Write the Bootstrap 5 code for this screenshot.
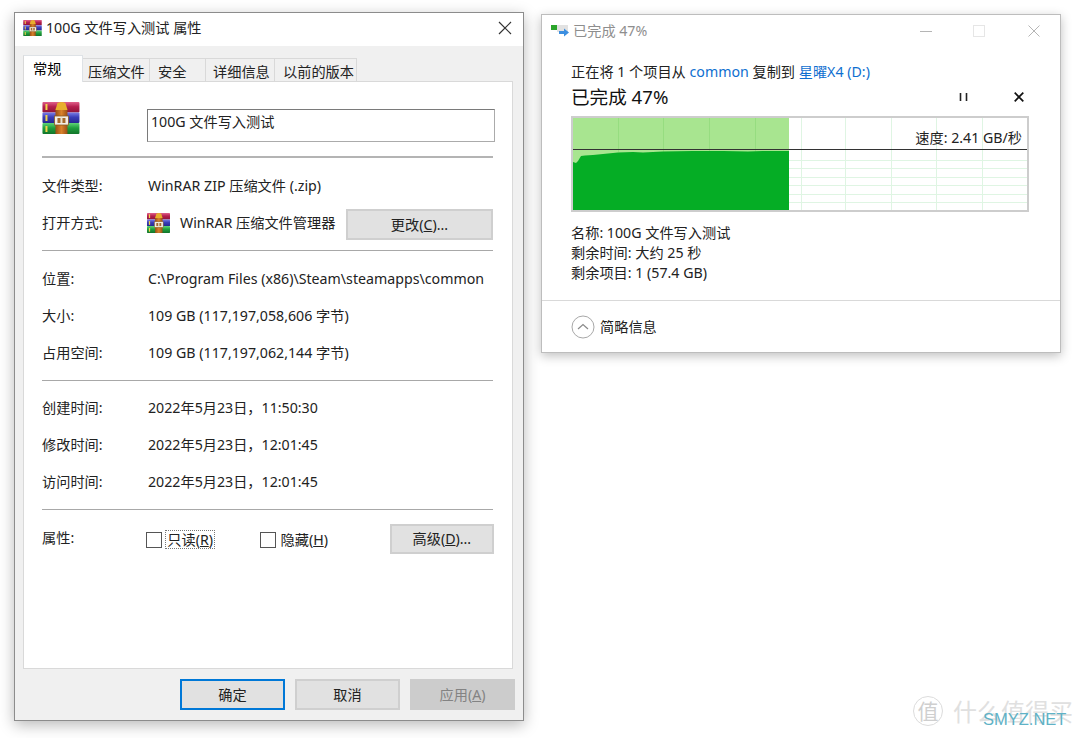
<!DOCTYPE html>
<html lang="zh-CN">
<head>
    <meta charset="UTF-8">
    <meta name="viewport" content="width=device-width, initial-scale=1.0">
    <title>100G 文件写入测试 属性</title>
    <link href="https://cdn.jsdelivr.net/npm/bootstrap@5.3.3/dist/css/bootstrap.min.css" rel="stylesheet">
    <style>
        html, body {
            height: 738px;
            overflow: hidden;
            background-color: #fff;
        }
        body {
            font-family: "Noto Sans", "Noto Sans CJK SC", sans-serif;
            font-size: 14.2px;
            line-height: 20px;
            color: #222;
        }
        .desktop {
            padding: 12px 0 0 14px;
            gap: 17px;
        }

        /* properties window */
        .props-win {
            width: 510px;
            height: 709px;
            background-color: #f0f0f0;
            border: 1px solid #8c8c8c;
            box-shadow: 0 4px 14px rgba(0, 0, 0, .28);
        }
        .props-title {
            height: 33px;
            background-color: #fff;
            padding: 0 0 3px 8px;
            font-size: 14.2px;
            gap: 4px;
        }
        .props-close {
            margin-right: 11px;
        }
        .tab-strip {
            margin: 9px 0 0 8px;
            height: 26px;
            align-items: flex-end;
            border: 0;
        }
        .tab-strip .nav-link {
            height: 23px;
            padding: 0 0 0 8px;
            margin: 0;
            font-size: 14.2px;
            line-height: 26px;
            color: #222;
            background-color: #f0f0f0;
            border: 1px solid #d9d9d9;
            border-bottom: 0;
            border-left: 0;
            border-radius: 0;
            text-align: left;
            white-space: nowrap;
            overflow: hidden;
        }
        .tab-strip .nav-link.active {
            height: 27px;
            width: 60px;
            margin-bottom: -1px;
            padding-left: 9px;
            line-height: 25px;
            background-color: #fff;
            border-left: 1px solid #d9d9d9;
            position: relative;
            z-index: 1;
        }
        .tab-strip .tab-w1 { width: 67px; padding-left: 5px; }
        .tab-w2 { width: 56px; }
        .tab-strip .tab-w3 { width: 69px; padding-left: 7px; }
        .tab-w4 { width: 82px; }
        .tab-panel {
            width: 490px;
            height: 588px;
            margin-left: 8px;
            padding: 20px 18px 0 18px;
            background-color: #fff;
            border: 1px solid #d9d9d9;
        }
        .name-row {
            height: 54px;
        }
        .name-input {
            width: 349px;
            height: 33px;
            margin: 7px -1px 0 67px;
            padding: 0 3px 10px;
            font-size: 14.2px;
            line-height: 22px;
            color: #222;
            border: 1px solid #7a7a7a;
            border-bottom-color: #ababab;
            border-right-color: #ababab;
            border-radius: 0;
        }
        .sep-line {
            width: 451px;
            margin: 0;
            border: 0;
            border-top: 1px solid #a8a8a8;
            opacity: 1;
        }
        .sep-thick {
            border-top: 2px solid #b4b4b4;
        }
        .prop-group {
            padding: 9px 0;
        }
        .prop-group-b {
            padding: 8px 0 9px;
        }
        .prop-row {
            height: 37px;
        }
        .prop-key {
            width: 106px;
            flex-shrink: 0;
        }
        .rar-icon-sm {
            margin: 0 10px 0 -1px;
        }
        .win-btn {
            height: 31px;
            padding: 0;
            font-size: 14.2px;
            line-height: 26px;
            color: #222;
            background-color: #e1e1e1;
            border: 2px solid #cfcfcf;
            border-radius: 0;
        }
        .win-btn:disabled {
            color: #838383;
            background-color: #ccc;
            border-color: #ccc;
            opacity: 1;
        }
        .win-btn-default {
            border-color: #0078d7;
        }
        .btn-change {
            width: 147px;
            margin: 4px 1px 0 auto;
        }
        .btn-std {
            width: 105px;
        }
        .attr-row {
            padding-top: 14px;
            height: 44px;
        }
        .attr-row .win-btn {
            height: 30px;
            margin-left: 1px;
        }
        .attr-key {
            width: 105px;
            margin-top: -3px;
        }
        .win-check {
            width: 16px;
            height: 16px;
            border: 1px solid #555;
            background-color: #fff;
            flex-shrink: 0;
            margin-right: 3px;
        }
        .check-label {
            padding: 0 1px;
            border: 1px dotted transparent;
            line-height: 17px;
        }
        .check-focus {
            border-color: #777;
        }
        .check-one {
            width: 114px;
            margin-top: 1px;
        }
        .check-two {
            width: 130px;
            margin-top: 1px;
        }
        .props-actions {
            padding: 10px 8px 0 0;
            gap: 10px;
        }

        /* copy progress window */
        .copy-win {
            width: 520px;
            height: 339px;
            margin-top: 2px;
            background-color: #fff;
            border: 1px solid #bdbdbd;
            box-shadow: 0 3px 10px rgba(0, 0, 0, .25);
        }
        .copy-title {
            height: 33px;
            padding: 0 20px 2px 9px;
            color: #8e8e8e;
            font-size: 14.2px;
        }
        .copy-title-text {
            margin-left: 4px;
        }
        .copy-controls {
            gap: 41px;
        }
        .copy-close {
            margin-left: 2px;
        }
        .copy-body {
            padding: 14px 31px 0 29px;
        }
        .copy-link {
            color: #0f6fd0;
            text-decoration: none;
        }
        .copy-head {
            height: 29px;
            font-size: 18.6px;
            line-height: 27px;
            color: #111;
        }
        .copy-head-icons {
            gap: 46px;
            margin-right: 5px;
        }
        .speed-chart {
            width: 458px;
            height: 96px;
            margin-top: 5px;
            border: 2px solid #cdcdcd;
        }
        .speed-chart svg {
            display: block;
        }
        .speed-label {
            position: absolute;
            right: 5px;
            top: 10px;
            color: #222;
        }
        .copy-info {
            margin-top: 11px;
        }
        .copy-more {
            height: 52px;
            margin-top: 17px;
            padding-left: 29px;
            border-top: 1px solid #d9d9d9;
            gap: 5px;
        }

        /* site watermark */
        .site-mark {
            position: absolute;
            left: 913px;
            top: 696px;
            width: 167px;
            height: 42px;
            overflow: hidden;
        }
        .mark-badge {
            width: 30px;
            height: 30px;
            border: 1px solid #dcdcdc;
            border-radius: 50%;
            color: #cfcfcf;
            font-size: 21px;
            line-height: 28px;
            text-align: center;
        }
        .mark-text {
            position: absolute;
            left: 40px;
            top: 1px;
            font-size: 24px;
            line-height: 30px;
            color: #e0e0e0;
            white-space: nowrap;
        }
        .mark-net {
            position: absolute;
            left: 70px;
            top: 13px;
            font-family: "Liberation Sans", sans-serif;
            font-size: 16.5px;
            line-height: 20px;
            color: #5fb2c6;
        }
    </style>
</head>
<body>

<!-- shared icon -->
<svg width="0" height="0" class="position-absolute">
    <defs>
        <linearGradient id="bookRed" x1="0" y1="0" x2="0" y2="1"><stop offset="0" stop-color="#e0608a"/><stop offset=".45" stop-color="#b51f4f"/><stop offset="1" stop-color="#8e1439"/></linearGradient>
        <linearGradient id="bookBlue" x1="0" y1="0" x2="0" y2="1"><stop offset="0" stop-color="#7a7ee6"/><stop offset=".45" stop-color="#3a3db8"/><stop offset="1" stop-color="#25288f"/></linearGradient>
        <linearGradient id="bookGreen" x1="0" y1="0" x2="0" y2="1"><stop offset="0" stop-color="#5fd477"/><stop offset=".45" stop-color="#1f9f3e"/><stop offset="1" stop-color="#12752a"/></linearGradient>
        <linearGradient id="beltBrown" x1="0" y1="0" x2="1" y2="0"><stop offset="0" stop-color="#9a4f16"/><stop offset=".5" stop-color="#d9822b"/><stop offset="1" stop-color="#9a4f16"/></linearGradient>
    </defs>
    <symbol id="rarIcon" viewBox="0 0 37 32">
        <rect x="0" y="0" width="37" height="10.500" rx="1" fill="url(#bookRed)"/>
        <rect x="0" y="10.500" width="37" height="10.500" rx="1" fill="url(#bookBlue)"/>
        <rect x="0" y="21" width="37" height="11" rx="1" fill="url(#bookGreen)"/>
        <rect x="3" y="2" width="2" height="6" fill="#f3d44a"/>
        <rect x="3" y="13" width="2" height="6" fill="#f3d44a"/>
        <rect x="3" y="24" width="2" height="6" fill="#f3d44a"/>
        <rect x="13" y="6" width="12" height="26" fill="url(#beltBrown)"/>
        <path d="M13 8 L15 1 Q19 -1 23 1 L25 8 Z" fill="#e8ae2e"/>
        <rect x="12" y="14" width="14" height="9" fill="#f3efe6" stroke="#8b5a20" stroke-width=".8"/>
        <rect x="15" y="16" width="8" height="5" fill="#a56a2c"/>
        <rect x="18" y="15" width="2" height="6" fill="#e8e2d2"/>
    </symbol>
</svg>

<div class="desktop d-flex align-items-start">

    <!-- Properties window -->
    <div class="props-win flex-shrink-0">
        <div class="props-title d-flex align-items-center">
            <svg width="19" height="16"><use href="#rarIcon"/></svg>
            <span class="flex-grow-1">100G 文件写入测试 属性</span>
            <svg class="props-close" width="14" height="14" viewBox="0 0 14 14"><path d="M1 1 13 13M13 1 1 13" stroke="#333" stroke-width="1.2" fill="none"/></svg>
        </div>

        <ul class="nav nav-tabs tab-strip">
            <li class="nav-item"><a class="nav-link active" href="#">常规</a></li>
            <li class="nav-item"><a class="nav-link tab-w1" href="#">压缩文件</a></li>
            <li class="nav-item"><a class="nav-link tab-w2" href="#">安全</a></li>
            <li class="nav-item"><a class="nav-link tab-w3" href="#">详细信息</a></li>
            <li class="nav-item"><a class="nav-link tab-w4" href="#">以前的版本</a></li>
        </ul>

        <div class="tab-panel">
            <div class="name-row d-flex align-items-start">
                <svg width="38" height="32"><use href="#rarIcon"/></svg>
                <input class="form-control name-input" type="text" value="100G 文件写入测试">
            </div>
            <hr class="sep-line sep-thick">

            <div class="prop-group">
                <div class="prop-row d-flex align-items-center">
                    <div class="prop-key">文件类型:</div>
                    <div>WinRAR ZIP 压缩文件 (.zip)</div>
                </div>
                <div class="prop-row d-flex align-items-center">
                    <div class="prop-key">打开方式:</div>
                    <svg class="rar-icon-sm" width="23" height="20"><use href="#rarIcon"/></svg>
                    <div>WinRAR 压缩文件管理器</div>
                    <button class="btn win-btn btn-change" type="button">更改(<u>C</u>)...</button>
                </div>
            </div>
            <hr class="sep-line">

            <div class="prop-group">
                <div class="prop-row d-flex align-items-center">
                    <div class="prop-key">位置:</div>
                    <div>C:\Program Files (x86)\Steam\steamapps\common</div>
                </div>
                <div class="prop-row d-flex align-items-center">
                    <div class="prop-key">大小:</div>
                    <div>109 GB (117,197,058,606 字节)</div>
                </div>
                <div class="prop-row d-flex align-items-center">
                    <div class="prop-key">占用空间:</div>
                    <div>109 GB (117,197,062,144 字节)</div>
                </div>
            </div>
            <hr class="sep-line">

            <div class="prop-group-b">
                <div class="prop-row d-flex align-items-center">
                    <div class="prop-key">创建时间:</div>
                    <div>2022年5月23日，11:50:30</div>
                </div>
                <div class="prop-row d-flex align-items-center">
                    <div class="prop-key">修改时间:</div>
                    <div>2022年5月23日，12:01:45</div>
                </div>
                <div class="prop-row d-flex align-items-center">
                    <div class="prop-key">访问时间:</div>
                    <div>2022年5月23日，12:01:45</div>
                </div>
            </div>
            <hr class="sep-line">

            <div class="attr-row d-flex align-items-center">
                <div class="attr-key">属性:</div>
                <div class="check-one d-flex align-items-center">
                    <span class="win-check"></span>
                    <span class="check-label check-focus">只读(<u>R</u>)</span>
                </div>
                <div class="check-two d-flex align-items-center">
                    <span class="win-check"></span>
                    <span class="check-label">隐藏(<u>H</u>)</span>
                </div>
                <button class="btn win-btn btn-std" type="button">高级(<u>D</u>)...</button>
            </div>
        </div>

        <div class="props-actions d-flex justify-content-end">
            <button class="btn win-btn win-btn-default btn-std" type="button">确定</button>
            <button class="btn win-btn btn-std" type="button">取消</button>
            <button class="btn win-btn btn-std" type="button" disabled>应用(<u>A</u>)</button>
        </div>
    </div>

    <!-- Copy progress window -->
    <div class="copy-win flex-shrink-0">
        <div class="copy-title d-flex align-items-center mt-0">
            <svg width="18" height="12" viewBox="0 0 18 12">
                <rect x="6" y="0" width="11" height="7" fill="#e2e2e2"/>
                <rect x="0" y="0" width="6" height="5" fill="#2ba52b"/>
                <path d="M8 6H13V3.500L18 7.500 13 11.500V9H8Z" fill="#3c8fe0"/>
            </svg>
            <span class="copy-title-text flex-grow-1">已完成 47%</span>
            <div class="copy-controls d-flex align-items-center">
                <svg width="12" height="12" viewBox="0 0 12 12"><path d="M0 6.500H12" stroke="#b5b5b5" fill="none"/></svg>
                <svg width="12" height="12" viewBox="0 0 12 12"><rect x=".5" y=".5" width="11" height="11" fill="none" stroke="#e6e6e6"/></svg>
                <svg class="copy-close" width="12" height="12" viewBox="0 0 12 12"><path d="M.5 .5 11.500 11.500M11.500 .5 .5 11.500" stroke="#b5b5b5" fill="none"/></svg>
            </div>
        </div>

        <div class="copy-body">
            <div>正在将 1 个项目从 <a class="copy-link" href="#">common</a> 复制到 <a class="copy-link" href="#">星曜X4 (D:)</a></div>
            <div class="copy-head d-flex align-items-center justify-content-between">
                <span>已完成 47%</span>
                <div class="copy-head-icons d-flex align-items-center">
                    <svg width="9" height="10" viewBox="0 0 9 10"><path d="M1.500 1V9M7.500 1V9" stroke="#222" stroke-width="1.6" fill="none"/></svg>
                    <svg width="10" height="10" viewBox="0 0 10 10"><path d="M.7 .7 9.300 9.300M9.300 .7 .7 9.300" stroke="#111" stroke-width="1.7" fill="none"/></svg>
                </div>
            </div>

            <div class="speed-chart position-relative">
                <svg width="454" height="92" viewBox="0 0 454 92" id="speedSvg"></svg>
                <span class="speed-label">速度: 2.41 GB/秒</span>
            </div>

            <div class="copy-info">
                <div>名称: 100G 文件写入测试</div>
                <div>剩余时间: 大约 25 秒</div>
                <div>剩余项目: 1 (57.4 GB)</div>
            </div>
        </div>

        <div class="copy-more d-flex align-items-center">
            <svg width="24" height="24" viewBox="0 0 24 24">
                <circle cx="12" cy="12" r="11" fill="none" stroke="#a8a8a8"/>
                <path d="M7 14 12 9.500 17 14" fill="none" stroke="#8a8a8a" stroke-width="1.2"/>
            </svg>
            <span>简略信息</span>
        </div>
    </div>
</div>

<!-- Watermark -->
<div class="site-mark">
    <div class="mark-badge">值</div>
    <div class="mark-text">什么值得买</div>
    <div class="mark-net">SMYZ.NET</div>
</div>

<script src="https://cdn.jsdelivr.net/npm/bootstrap@5.3.3/dist/js/bootstrap.bundle.min.js"></script>
<script>
// Draw the speed graph
function drawChart() {
    const done = 216;
    const vLines = [45, 90, 136, 182, 228, 272, 318, 363, 409];
    const hLines = [42, 50, 59, 67, 76, 84];
    const curve = [[0, 44], [3, 45], [5, 43], [8, 38], [12, 37.500], [20, 37], [30, 36], [45, 34.500], [60, 34], [70, 34.500], [90, 33.500], [120, 33], [150, 33], [175, 33.500], [190, 33], [216, 33]];
    let svg = `<rect width="${done}" height="92" fill="#a8e590"/>`;

    hLines.forEach(y => {
        svg += `<path d="M${done} ${y + .5}H454" stroke="#dff5e3"/>`;
    });
    vLines.forEach(x => {
        const color = x < done ? '#96dd80' : '#dff5e3';
        const bottom = x < done ? 34 : 92;
        svg += `<path d="M${x + .5} 0V${bottom}" stroke="${color}"/>`;
    });

    const points = curve.map(p => p.join(',')).join(' ');
    svg += `<polygon points="0,92 ${points} ${done},92" fill="#05ad25"/>`;
    svg += `<path d="M0 31.500H454" stroke="#333"/>`;
    document.getElementById('speedSvg').innerHTML = svg;
}

document.addEventListener('DOMContentLoaded', drawChart);
</script>
</body>
</html>
